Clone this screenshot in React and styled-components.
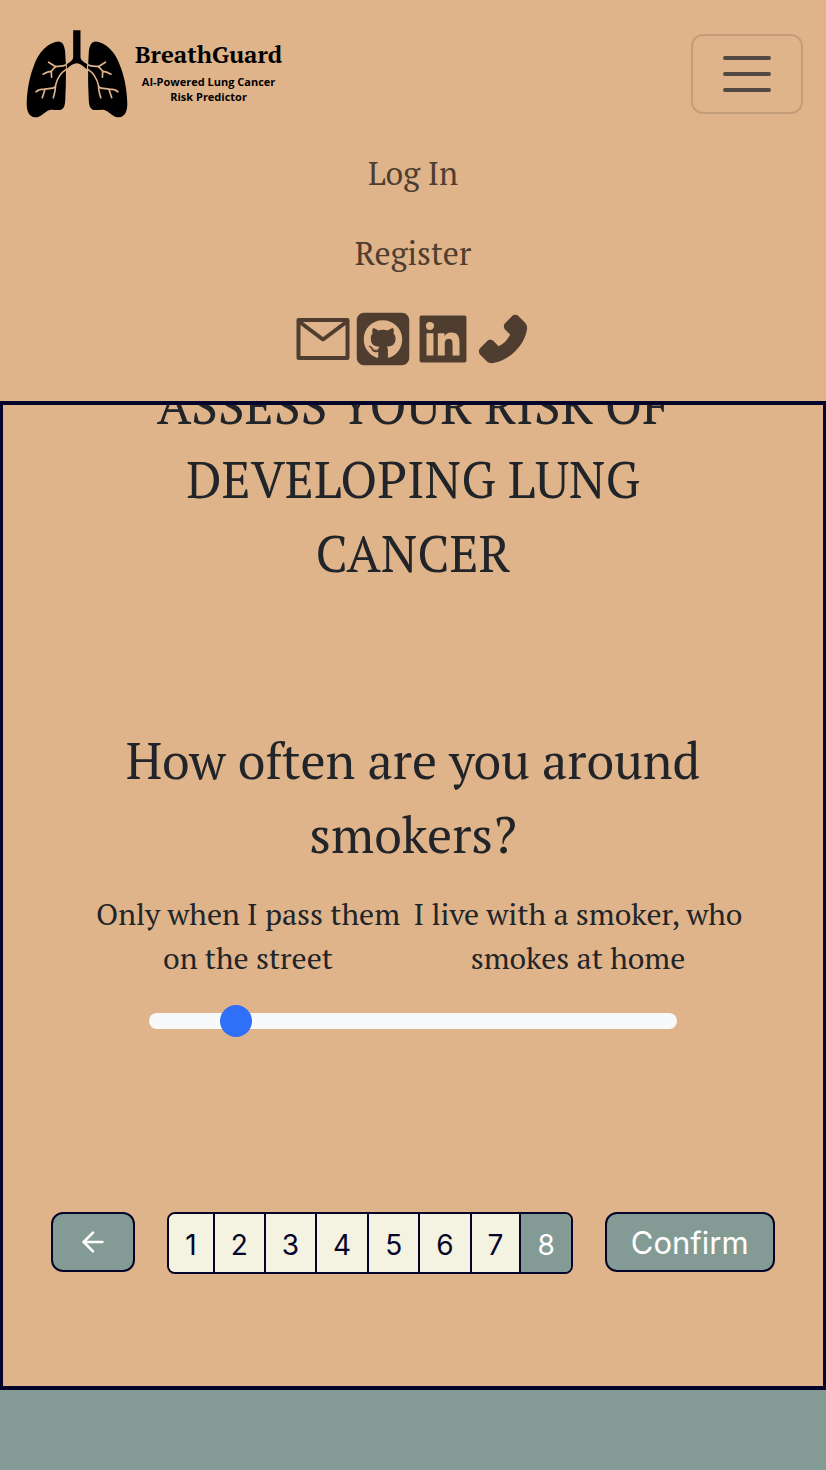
import React, { useState } from "react";
import styled, { createGlobalStyle } from "styled-components";
import { FaSquareGithub } from "react-icons/fa6";
import { AiFillLinkedin, AiFillPhone } from "react-icons/ai";
import { FiArrowLeft } from "react-icons/fi";

const sand = "#e0b48b";
const sage = "#839b94";
const navy = "#04042a";
const ink = "#212529";
const brown = "#4f3e30";
const cream = "#f4f2e0";
const serif = `"PT Serif", "Liberation Serif", serif`;
const sans = `Inter, "Liberation Sans", sans-serif`;

const GlobalStyle = createGlobalStyle`
  * { box-sizing: border-box; }
  body {
    margin: 0;
    background: ${sage};
    color: ${ink};
    font-family: ${serif};
  }
`;

const Header = styled.header`
  background: ${sand};
  padding: 15px 23px 32px;
`;

const TopBar = styled.div`
  display: flex;
  align-items: center;
  justify-content: space-between;
  min-height: 118px;
`;

const Brand = styled.a`
  display: flex;
  align-items: center;
  gap: 7px;
  padding-left: 3px;
  color: #000;
  text-decoration: none;
`;

const BrandText = styled.span`
  display: flex;
  flex-direction: column;
  align-items: center;
  padding-bottom: 10px;
`;

const BrandName = styled.span`
  font-size: 24px;
  line-height: 40px;
  font-weight: 700;
`;

const Tagline = styled.span`
  width: 144px;
  font-family: "Open Sans", sans-serif;
  font-size: 11px;
  line-height: 15px;
  font-weight: 700;
  text-align: center;
`;

const Toggler = styled.button`
  display: flex;
  padding: 8px 24px;
  border: 2px solid #c49e7b;
  border-radius: 12px;
  background: transparent;
`;

const Nav = styled.nav`
  display: flex;
  flex-direction: column;
  align-items: center;
`;

const NavLink = styled.a`
  color: ${brown};
  font-size: 32px;
  line-height: 80px;
  text-decoration: none;
`;

const Socials = styled.div`
  display: flex;
  padding-top: 16px;
`;

const SocialLink = styled.a`
  display: flex;
  color: ${brown};
  font-size: 60px;
`;

const Panel = styled.main`
  display: flex;
  flex-direction: column;
  align-items: center;
  overflow: hidden;
  padding: 0 48px 112px;
  border: solid ${navy};
  border-width: 4px 3px;
  background: ${sand};
`;

const Title = styled.h1`
  max-width: 640px;
  margin: -37px 0 133px;
  font-size: 50px;
  line-height: 74px;
  font-weight: 400;
  text-align: center;
  text-transform: uppercase;
`;

const Question = styled.label`
  max-width: 660px;
  font-size: 50px;
  line-height: 74px;
  text-align: center;
`;

const Extremes = styled.div`
  display: grid;
  grid-template-columns: 1fr 1fr;
  width: 100%;
  max-width: 660px;
  margin: 21px 0 25px;
  font-size: 30px;
  line-height: 44px;
  text-align: center;
`;

const Slider = styled.input`
  appearance: none;
  width: 80%;
  max-width: 528px;
  height: 32px;
  margin: 0 0 175px;
  background: transparent;

  &::-webkit-slider-runnable-track {
    height: 16px;
    border-radius: 8px;
    background: #f8f9fa;
  }

  &::-webkit-slider-thumb {
    appearance: none;
    width: 32px;
    height: 32px;
    margin-top: -8px;
    border-radius: 50%;
    background: #306ff7;
  }
`;

const Controls = styled.div`
  display: flex;
  align-items: flex-start;
  gap: 32px;
`;

const ActionButton = styled.button`
  display: flex;
  align-items: center;
  height: 60px;
  padding: 0 24px;
  border: 2px solid ${navy};
  border-radius: 12px;
  background: ${sage};
  color: #fff;
  font-family: ${sans};
  font-size: 31px;
`;

const Pager = styled.div`
  display: flex;
  overflow: hidden;
  height: 62px;
  border: 2px solid ${navy};
  border-radius: 8px;
`;

const PageButton = styled.button`
  padding: 3px 16px 0;
  border: 0;
  background: ${(p) => (p.$active ? sage : cream)};
  color: ${(p) => (p.$active ? "#fff" : navy)};
  font-family: ${sans};
  font-size: 28px;

  & + & {
    border-left: 2px solid ${navy};
  }
`;

const Lung = () => (
  <>
    <path d="M130 63C143 63 149 75 151 95L153 135V190L151 240C150 262 143 268 133 269C120 270 108 265 97 272C85 280 75 292 60 291C42 290 35 272 35 250C36 210 42 175 55 140C70 95 100 65 130 63Z" />
    <g fill="none" stroke={sand} strokeWidth="5" strokeLinecap="round" strokeLinejoin="round">
      <path d="M155 133C142 139 133 138 120 137L101 125M124 138Q115 143 110 152Q98 154 84 161M109 153L110 170" />
      <path d="M156 145C135 158 126 175 122 195Q120 203 108 204L88 206Q72 206 63 214M90 207L82 232M122 196C122 210 118 222 115 232" />
    </g>
  </>
);

const LungsLogo = () => (
  <svg width="102" height="88" viewBox="33 28 307 265" aria-hidden="true">
    <Lung />
    <g transform="translate(373 0) scale(-1 1)">
      <Lung />
    </g>
    <path d="M175 29H197V108C197 118 203 122 217 131L216 146C205 136 195 128 186 128C176 128 167 135 156 145V131C170 122 175 118 175 108Z" />
  </svg>
);

const MailIcon = () => (
  <svg width="60" height="60" viewBox="0 0 60 60" fill="none" stroke="currentColor" strokeWidth="4" strokeLinejoin="round" aria-hidden="true">
    <path d="M5.5 11H54.5V49H5.5Z" />
    <path d="M6 12.5L30 30.5L54 12.5" />
  </svg>
);

const socials = [
  { label: "Email", Icon: MailIcon },
  { label: "GitHub", Icon: FaSquareGithub },
  { label: "LinkedIn", Icon: AiFillLinkedin },
  { label: "Phone", Icon: AiFillPhone },
];

export default function App() {
  const [value, setValue] = useState(1);
  const [page, setPage] = useState(8);

  return (
    <>
      <GlobalStyle />
      <Header>
        <TopBar>
          <Brand href="#">
            <LungsLogo />
            <BrandText>
              <BrandName>BreathGuard</BrandName>
              <Tagline>AI-Powered Lung Cancer Risk Predictor</Tagline>
            </BrandText>
          </Brand>
          <Toggler type="button" aria-label="Toggle navigation">
            <svg width="60" height="60" viewBox="0 0 30 30" aria-hidden="true">
              <path
                d="M4 7h22M4 15h22M4 23h22"
                stroke="#212529"
                strokeOpacity="0.75"
                strokeWidth="2"
                strokeLinecap="round"
              />
            </svg>
          </Toggler>
        </TopBar>
        <Nav>
          <NavLink href="#login">Log In</NavLink>
          <NavLink href="#register">Register</NavLink>
          <Socials>
            {socials.map(({ label, Icon }) => (
              <SocialLink key={label} href={`#${label.toLowerCase()}`} aria-label={label}>
                <Icon />
              </SocialLink>
            ))}
          </Socials>
        </Nav>
      </Header>
      <Panel>
        <Title>Assess your risk of developing lung cancer</Title>
        <Question htmlFor="exposure">How often are you around smokers?</Question>
        <Extremes>
          <span>Only when I pass them on the street</span>
          <span>I live with a smoker, who smokes at home</span>
        </Extremes>
        <Slider
          id="exposure"
          type="range"
          min="0"
          max="7"
          value={value}
          onChange={(e) => setValue(Number(e.target.value))}
        />
        <Controls>
          <ActionButton type="button" aria-label="Previous question">
            <FiArrowLeft size={32} />
          </ActionButton>
          <Pager>
            {[1, 2, 3, 4, 5, 6, 7, 8].map((n) => (
              <PageButton key={n} type="button" $active={n === page} onClick={() => setPage(n)}>
                {n}
              </PageButton>
            ))}
          </Pager>
          <ActionButton type="button">Confirm</ActionButton>
        </Controls>
      </Panel>
    </>
  );
}
